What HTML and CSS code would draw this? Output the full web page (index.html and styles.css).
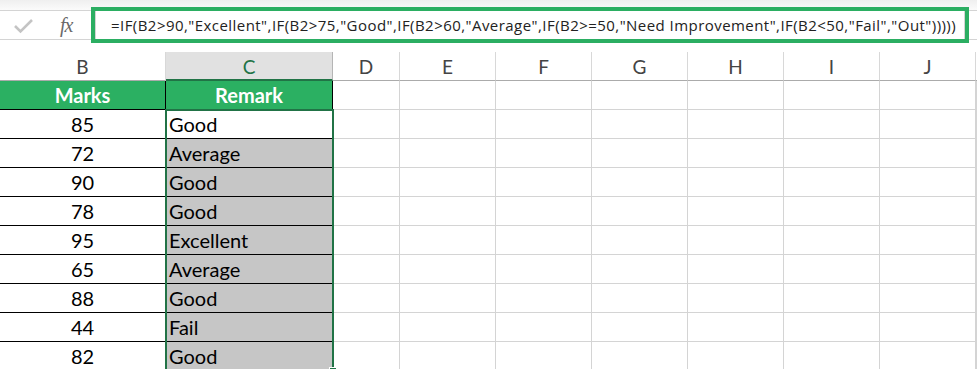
FILE: index.html
```html
<!DOCTYPE html>
<html lang="en">
<head>
  <meta charset="UTF-8">
  <title>IF formula - Remark</title>
  <link rel="stylesheet" href="styles.css">
</head>
<body>

<div class="top-strip"></div>

<div class="formula-bar">
  <div class="bar-icons">
    <svg class="icon-check" width="20" height="16" viewBox="0 0 20 16">
      <polyline points="1,8 6.5,13.5 18,2" fill="none" stroke="#c4c4c4" stroke-width="2.6"/>
    </svg>
    <span class="icon-fx">fx</span>
  </div>
  <div class="formula-input">=IF(B2&gt;90,"Excellent",IF(B2&gt;75,"Good",IF(B2&gt;60,"Average",IF(B2&gt;=50,"Need Improvement",IF(B2&lt;50,"Fail","Out")))))</div>
</div>

<div class="sheet" id="sheet">
  <!-- column headers -->
  <div class="col-head">B</div>
  <div class="col-head selected">C</div>
  <div class="col-head">D</div>
  <div class="col-head">E</div>
  <div class="col-head">F</div>
  <div class="col-head">G</div>
  <div class="col-head">H</div>
  <div class="col-head">I</div>
  <div class="col-head">J</div>
  <div class="col-head last"></div>
  <!-- 選択範囲 C2:C10 -->
  <div class="selection"></div>
</div>

<script>
// 表データ
const rows = [
  [85, 'Good'], [72, 'Average'], [90, 'Good'], [78, 'Good'], [95, 'Excellent'],
  [65, 'Average'], [88, 'Good'], [44, 'Fail'], [82, 'Good']
];
const sheet = document.getElementById('sheet');

function addRow(b, c, bCls, cCls) {
  const cb = document.createElement('div');
  cb.className = 'cell marks ' + bCls;
  cb.textContent = b;
  sheet.appendChild(cb);
  const cc = document.createElement('div');
  cc.className = 'cell remark ' + cCls;
  cc.textContent = c;
  sheet.appendChild(cc);
  for (let i = 0; i < 8; i++) {
    const e = document.createElement('div');
    e.className = 'cell';
    sheet.appendChild(e);
  }
}

addRow('Marks', 'Remark', 'head-row', 'head-row');
rows.forEach((r, i) => addRow(r[0], r[1], '', i === 0 ? 'active' : 'in-range'));
</script>

</body>
</html>
```

FILE: styles.css
```css
body {
  margin: 0;
  overflow: hidden;
  background: #fff;
  font-family: Lato, "Open Sans", sans-serif;
}

.top-strip {
  height: 10px;
  background: linear-gradient(#efefef, #fbfbfb);
}

.formula-bar {
  display: flex;
  height: 30px;
  border-top: 1px solid #d4d4d4;
  border-bottom: 1px solid #d4d4d4;
  box-sizing: border-box;
  margin-bottom: 12px;
}

.bar-icons {
  width: 95px;
  display: flex;
  align-items: center;
}

.icon-check {
  margin-left: 14px;
  margin-top: 2px;
}

.icon-fx {
  margin-left: 26px;
  font-family: "Liberation Serif", serif;
  font-style: italic;
  font-size: 20px;
  color: #6a6a6a;
  letter-spacing: -1px;
}

.formula-input {
  width: 870px;
  border-left: 1px solid #d4d4d4;
  border-right: 1px solid #d4d4d4;
  box-sizing: border-box;
  padding-left: 15px;
  font-family: "Open Sans", sans-serif;
  font-size: 15px;
  letter-spacing: 0.45px;
  line-height: 28px;
  color: #222;
  white-space: nowrap;
  outline: 4px solid #2bae62;
  outline-offset: 0;
}

.sheet {
  display: grid;
  grid-template-columns: 166px 167px 67px repeat(6, 96px) 1fr;
  grid-template-rows: 29px repeat(10, 29px);
  position: relative;
}

.col-head {
  box-sizing: border-box;
  border-right: 1px solid #d8d8d8;
  border-bottom: 1px solid #ababab;
  text-align: center;
  font-size: 19px;
  line-height: 29px;
  color: #444;
}

.col-head.selected {
  background: #e1e1e1;
  color: #217346;
  border-right-color: #b5b5b5;
  border-bottom: 2px solid #217346;
}

.col-head.last {
  border-right: none;
}

.cell {
  box-sizing: border-box;
  border-right: 1px solid #d4d4d4;
  border-bottom: 1px solid #d4d4d4;
  font-size: 20px;
  line-height: 28px;
  color: #000;
  white-space: nowrap;
}

.cell.marks {
  text-align: center;
  border-right-color: #000;
  border-bottom-color: #000;
}

.cell.remark {
  padding-left: 3px;
  border-right-color: #000;
  border-bottom-color: #000;
}

.cell.head-row {
  background: #2bb062;
  color: #fff;
  font-weight: bold;
  text-align: center;
  padding-left: 0;
}

.cell.in-range {
  background: #c6c6c6;
}

/* 選択枠は表の上に重ねる */
.selection {
  position: absolute;
  left: 165px;
  top: 57px;
  width: 169px;
  height: 263px;
  box-sizing: border-box;
  border: 2px solid #217346;
  pointer-events: none;
  z-index: 2;
}

/* フィルハンドル */
.selection::after {
  content: "";
  position: absolute;
  right: -5px;
  bottom: -5px;
  width: 6px;
  height: 6px;
  background: #217346;
  border: 1px solid #fff;
}
```
